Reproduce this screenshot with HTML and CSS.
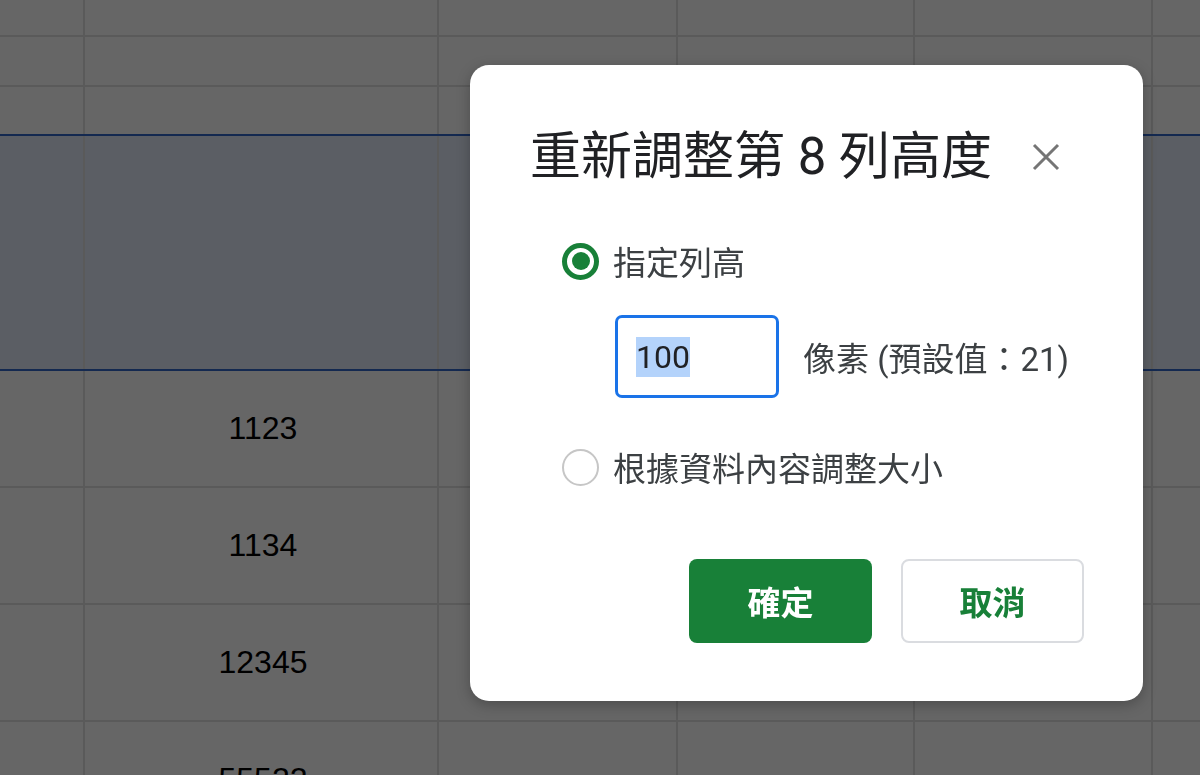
FILE: index.html
```html
<!DOCTYPE html>
<html lang="zh-Hant">
<head>
    <meta charset="UTF-8">
    <meta name="viewport" content="width=device-width, initial-scale=1.0">
    <title>調整列高</title>
    <link rel="stylesheet" href="styles.css">
</head>
<body>
    <!-- sheet under the dialog -->
    <div class="sheet">
        <div class="row r-top"><div class="cell c1"></div><div class="cell c2"></div><div class="cell c3"></div><div class="cell c4"></div><div class="cell c5"></div><div class="cell c6"></div></div>
        <div class="row r-def"><div class="cell c1"></div><div class="cell c2"></div><div class="cell c3"></div><div class="cell c4"></div><div class="cell c5"></div><div class="cell c6"></div></div>
        <div class="row r-def r-before"><div class="cell c1"></div><div class="cell c2"></div><div class="cell c3"></div><div class="cell c4"></div><div class="cell c5"></div><div class="cell c6"></div></div>
        <div class="row r-sel"><div class="cell c1"></div><div class="cell c2"></div><div class="cell c3"></div><div class="cell c4"></div><div class="cell c5"></div><div class="cell c6"></div></div>
        <div class="row r-tall"><div class="cell c1"></div><div class="cell c2">1123</div><div class="cell c3"></div><div class="cell c4"></div><div class="cell c5"></div><div class="cell c6"></div></div>
        <div class="row r-tall"><div class="cell c1"></div><div class="cell c2">1134</div><div class="cell c3"></div><div class="cell c4"></div><div class="cell c5"></div><div class="cell c6"></div></div>
        <div class="row r-tall"><div class="cell c1"></div><div class="cell c2">12345</div><div class="cell c3"></div><div class="cell c4"></div><div class="cell c5"></div><div class="cell c6"></div></div>
        <div class="row r-tall"><div class="cell c1"></div><div class="cell c2">55522</div><div class="cell c3"></div><div class="cell c4"></div><div class="cell c5"></div><div class="cell c6"></div></div>
    </div>

    <div class="backdrop"></div>

    <!-- resize row dialog -->
    <div class="dialog">
        <div class="dlg-head">
            <h1 class="dlg-title">重新調整第 8 列高度</h1>
            <div class="dlg-close">
                <svg width="28" height="28" viewBox="0 0 28 28">
                    <path d="M2 2 L26 26 M26 2 L2 26" stroke="#757575" stroke-width="3" fill="none"/>
                </svg>
            </div>
        </div>
        <div class="options">
            <div class="opt opt-first">
                <div class="radio checked"><div class="dot"></div></div>
                <span class="opt-label">指定列高</span>
            </div>
            <div class="size-row">
                <div class="size-box"><span class="sel-text">100</span></div>
                <span class="size-note">像素 (預設值：21)</span>
            </div>
            <div class="opt opt-second">
                <div class="radio"></div>
                <span class="opt-label">根據資料內容調整大小</span>
            </div>
        </div>
        <div class="actions">
            <div class="btn btn-ok">確定</div>
            <div class="btn btn-cancel">取消</div>
        </div>
    </div>
</body>
</html>
```

FILE: styles.css
```css
/* sheet */
body{
    margin: 0;
    background: #ffffff;
    overflow: hidden;
    font-family: Roboto, "Noto Sans CJK TC", sans-serif;
}
.sheet{
    width: 1200px;
}
.row{
    display: flex;
    box-sizing: border-box;
    border-bottom: 2px solid #e2e2e2;
}
.r-top{
    height: 37px;
}
.r-def{
    height: 50px;
}
.r-before{
    height: 47px;
    border-bottom: none;
}
.r-sel{
    height: 237px;
    background: #e4ecfb;
    border-top: 2px solid #3466c8;
    border-bottom: 2px solid #3466c8;
}
.r-tall{
    height: 117px;
}
.cell{
    box-sizing: border-box;
    border-right: 2px solid #e2e2e2;
    display: flex;
    align-items: center;
    justify-content: center;
    font-family: "Liberation Sans", Arial, sans-serif;
    font-size: 32px;
    color: #000;
}
.c1{ width: 85px; }
.c2{ width: 354px; padding-left: 4px; }
.c3{ width: 239px; }
.c4{ width: 237px; }
.c5{ width: 238px; }
.c6{ flex: 1; border-right: none; }

.backdrop{
    position: fixed;
    left: 0;
    top: 0;
    right: 0;
    bottom: 0;
    background: rgba(0, 0, 0, 0.6);
}

/* dialog */
.dialog{
    position: fixed;
    left: 470px;
    top: 65px;
    width: 673px;
    box-sizing: border-box;
    padding: 0 59px 58px 60px;
    background: #fff;
    border-radius: 19px;
    box-shadow: 0 4px 14px rgba(0, 0, 0, 0.25);
}
.dlg-head{
    display: flex;
    align-items: center;
    justify-content: space-between;
    height: 60px;
    margin-top: 62px;
}
.dlg-title{
    margin: 0;
    font-size: 51px;
    font-weight: 400;
    line-height: 60px;
    color: #202124;
    white-space: nowrap;
}
.dlg-close{
    width: 40px;
    height: 40px;
    margin-right: 18px;
    display: flex;
    align-items: center;
    justify-content: center;
}
.options{
    margin-left: 32px;
}
.opt{
    display: flex;
    align-items: center;
    height: 40px;
}
.opt-first{
    margin-top: 54px;
}
.opt-second{
    margin-top: 49px;
}
.radio{
    box-sizing: border-box;
    width: 37px;
    height: 37px;
    border-radius: 50%;
    border: 2px solid #c6c6c6;
    display: flex;
    align-items: center;
    justify-content: center;
}
.radio.checked{
    border: 5px solid #188038;
}
.dot{
    width: 18px;
    height: 18px;
    border-radius: 50%;
    background: #188038;
}
.opt-label{
    margin-left: 14px;
    font-size: 33px;
    color: #3c4043;
}
.size-row{
    display: flex;
    align-items: center;
    margin-top: 34px;
    margin-left: 53px;
}
.size-box{
    box-sizing: border-box;
    width: 164px;
    height: 83px;
    border: 3.5px solid #1a73e8;
    border-radius: 7px;
    padding-left: 18px;
    display: flex;
    align-items: center;
}
.sel-text{
    font-size: 32px;
    line-height: 40px;
    color: #202124;
    background: #b4d3fb;
}
.size-note{
    margin-left: 24px;
    font-size: 33px;
    color: #3c4043;
}
.actions{
    display: flex;
    justify-content: flex-end;
    gap: 29px;
    margin-top: 72px;
}
.btn{
    box-sizing: border-box;
    width: 183px;
    height: 84px;
    border-radius: 8px;
    display: flex;
    align-items: center;
    justify-content: center;
    font-size: 33px;
    font-weight: 700;
}
.btn-ok{
    background: #188038;
    color: #fff;
}
.btn-cancel{
    border: 2px solid #dadce0;
    color: #188038;
}
```
